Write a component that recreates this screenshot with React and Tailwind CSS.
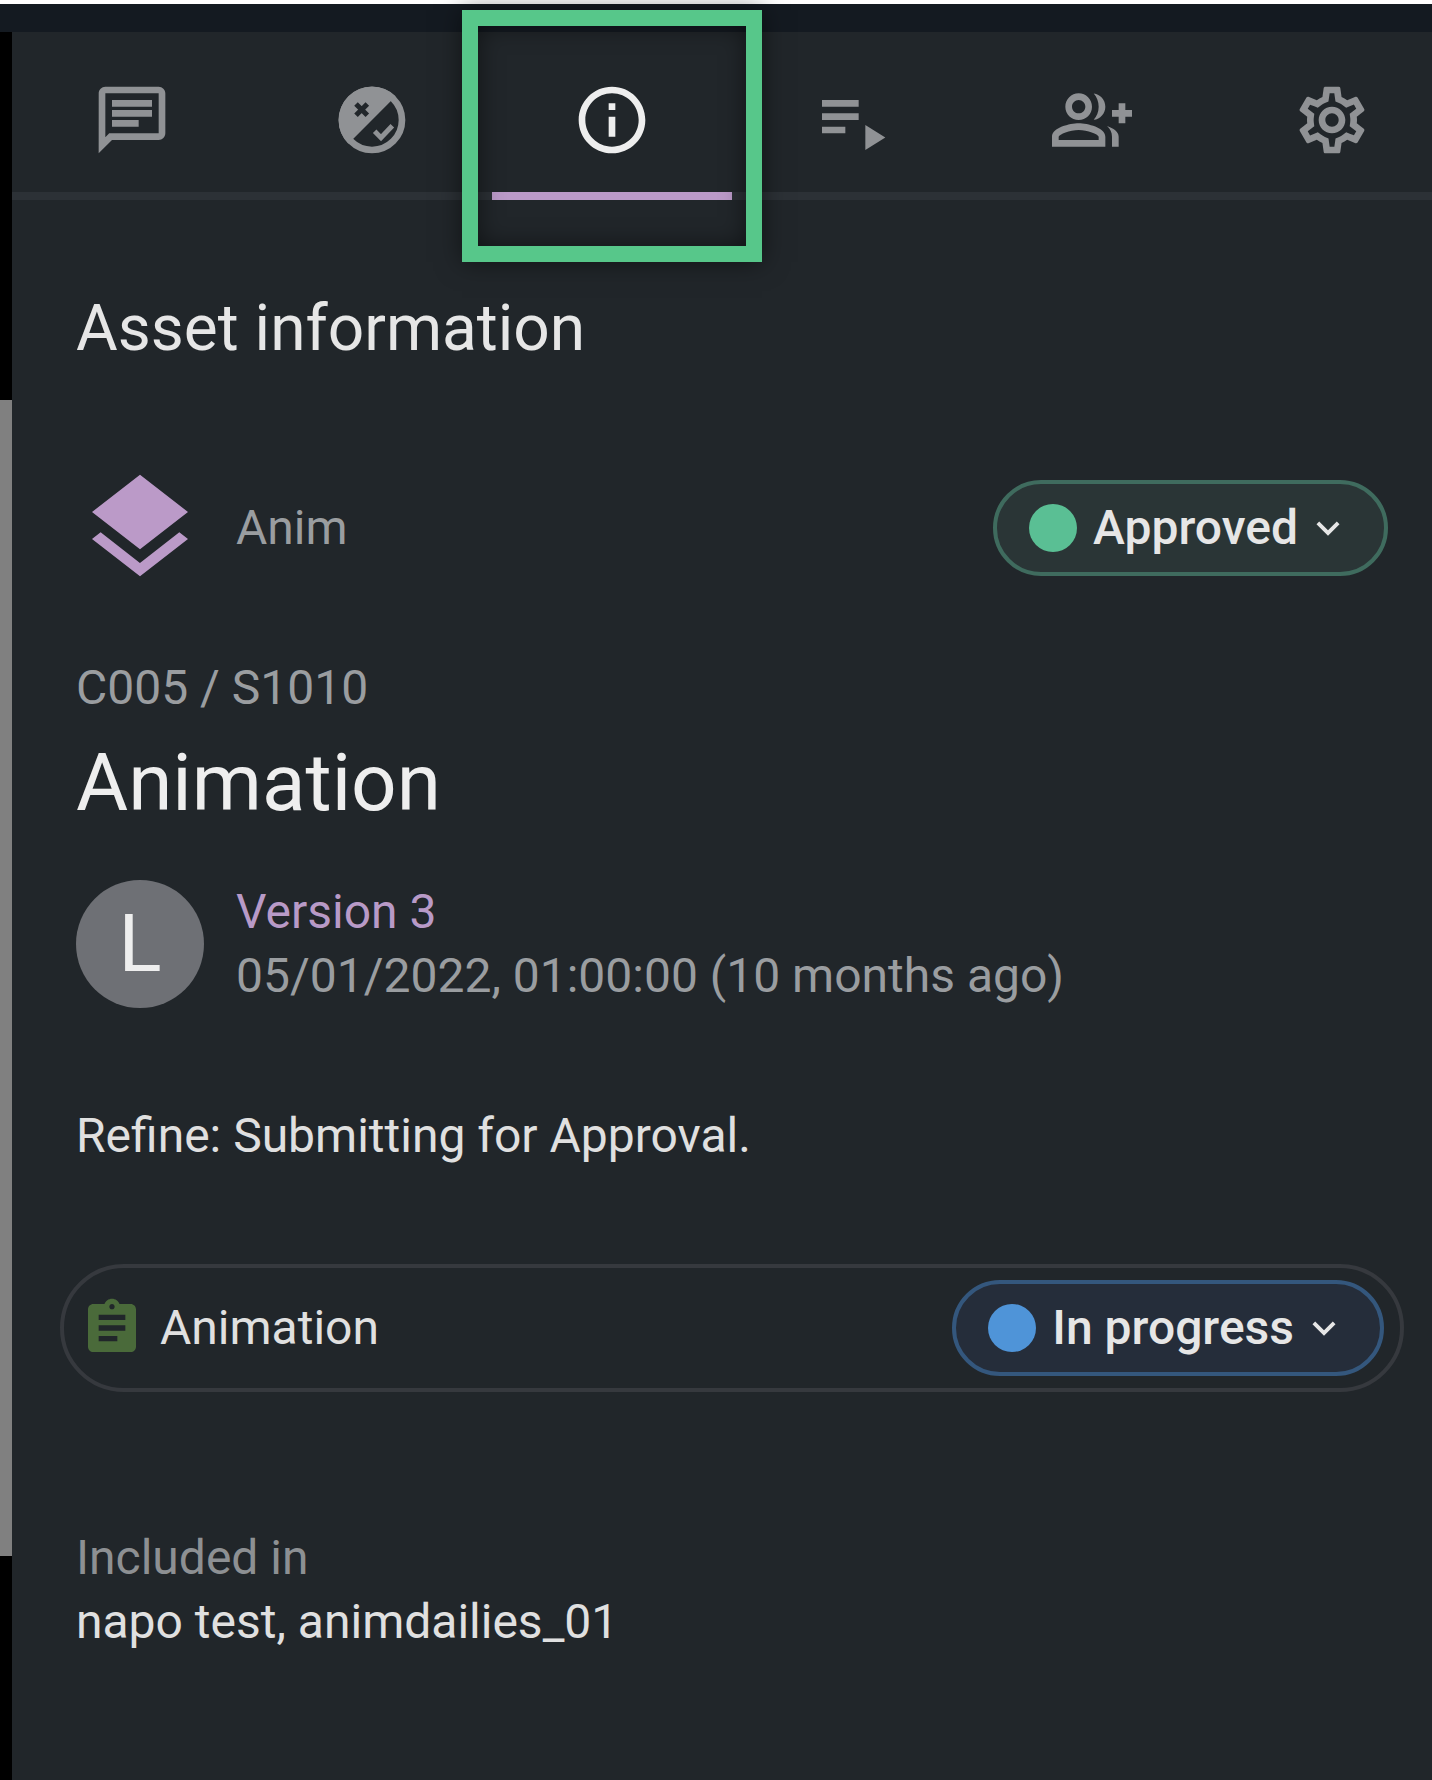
import { MdOutlineChat, MdOutlineInfo, MdOutlineGroupAdd, MdOutlineSettings, MdLayers, MdAssignment, MdExpandMore } from 'react-icons/md'

function RuleIcon({ className }) {
  return (
    <svg viewBox="0 0 24 24" className={className}>
      <circle cx="12" cy="12" r="9" fill="none" stroke="currentColor" strokeWidth="2" />
      <path d="M19.1 4.9A10 10 0 0 0 4.9 19.1Z" fill="currentColor" />
      <path d="M7.2 7.2l3.4 3.4M10.6 7.2L7.2 10.6" stroke="#21262a" strokeWidth="1.5" fill="none" />
      <path d="M12.8 15.4l1.9 1.9 3.4-3.6" stroke="currentColor" strokeWidth="1.5" fill="none" />
    </svg>
  )
}

function PlaylistIcon({ className }) {
  return (
    <svg viewBox="0 0 24 24" fill="currentColor" className={className}>
      <path d="M3 6h11v2H3zm0 4h11v2H3zm0 4h7v2H3zM16 13.5V21l6-3.75z" />
    </svg>
  )
}

function Tab({ icon: Icon, active }) {
  return (
    <div className="relative flex h-[168px] w-[240px] shrink-0 justify-center pt-[48px]">
      <Icon className={`h-[80px] w-[80px] ${active ? 'text-[#eeeeee]' : 'text-[#909295]'}`} />
      {active && <div className="absolute bottom-0 left-0 right-0 h-[8px] bg-[#bb9ac8]" />}
    </div>
  )
}

function StatusChip({ label, dot, border, bg }) {
  return (
    <div className={`flex h-[96px] items-center rounded-full border-4 pl-8 pr-[33px] ${border} ${bg}`}>
      <span className={`h-[48px] w-[48px] rounded-full ${dot}`} />
      <span className="ml-4 text-[48px] font-medium leading-none text-[#e6e6e6]">{label}</span>
      <MdExpandMore className="ml-[7px] h-[46px] w-[46px] text-[#e6e6e6]" />
    </div>
  )
}

export default function App() {
  return (
    <div className="relative flex h-[1780px] w-[1432px] flex-col overflow-hidden bg-[#21262a] font-['Roboto',sans-serif]">
      <div className="h-1 bg-white" />
      <div className="h-7 bg-[#141a21]" />
      <div className="flex flex-1">
        <div className="flex w-3 shrink-0 flex-col bg-black">
          <div className="h-[368px]" />
          <div className="h-[1156px] bg-[#808080]" />
        </div>
        <div className="w-[1440px] shrink-0 bg-[#21262a]">
          <div className="flex h-[168px] border-b-8 border-[#2c3136]">
            <Tab icon={MdOutlineChat} />
            <Tab icon={RuleIcon} />
            <Tab icon={MdOutlineInfo} active />
            <Tab icon={PlaylistIcon} />
            <Tab icon={MdOutlineGroupAdd} />
            <Tab icon={MdOutlineSettings} />
          </div>

          <div className="px-[64px]">
            <h2 className="mt-[97px] text-[64px] font-normal leading-[64px] text-[#e6e6e6]">Asset information</h2>

            <div className="mt-[103px] flex h-[128px] items-center justify-between">
              <div className="flex items-center">
                <MdLayers className="h-[128px] w-[128px] text-[#bb9ac8]" />
                <span className="ml-8 text-[48px] text-[#9a9da0]">Anim</span>
              </div>
              <StatusChip label="Approved" dot="bg-[#5abf94]" border="border-[#3f6b5e]" bg="bg-[#2a3536]" />
            </div>

            <p className="mt-[64px] text-[48px] leading-[64px] text-[#9a9da0]">C005 / S1010</p>
            <h1 className="mt-[15px] text-[80px] font-normal leading-[96px] text-[#eeeeee]">Animation</h1>

            <div className="mt-[49px] flex items-center">
              <div className="flex h-[128px] w-[128px] items-center justify-center rounded-full bg-[#6e7075] text-[80px] text-[#eeeeee]">L</div>
              <div className="ml-8 text-[48px] leading-[64px]">
                <p className="text-[#b89ac7]">Version 3</p>
                <p className="text-[#9a9da0]">05/01/2022, 01:00:00 (10 months ago)</p>
              </div>
            </div>

            <p className="mt-[96px] text-[48px] leading-[64px] text-[#e0e0e0]">Refine: Submitting for Approval.</p>

            <div className="-mx-4 mt-[96px] flex h-[128px] items-center justify-between rounded-full border-4 border-[#36393e] px-4">
              <div className="flex items-center">
                <MdAssignment className="h-[64px] w-[64px] text-[#4a6a3a]" />
                <span className="ml-4 text-[48px] text-[#e0e0e0]">Animation</span>
              </div>
              <StatusChip label="In progress" dot="bg-[#4f94d8]" border="border-[#34577d]" bg="bg-[#252d3a]" />
            </div>

            <p className="mt-[134px] text-[48px] leading-[64px] text-[#8d9093]">Included in</p>
            <p className="text-[48px] leading-[64px] text-[#e0e0e0]">napo test, animdailies_01</p>
          </div>
        </div>
      </div>

      <div className="absolute left-[462px] top-[10px] h-[252px] w-[300px] border-[16px] border-[#57c78a] shadow-[0_0_24px_rgba(0,0,0,0.5),inset_0_0_24px_rgba(0,0,0,0.5)]" />
    </div>
  )
}
